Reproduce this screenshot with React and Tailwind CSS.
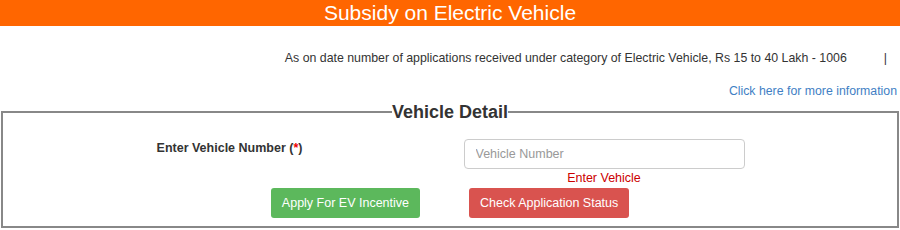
export default function App() {
    return (
        <div className="w-[900px] h-[230px] bg-white overflow-hidden font-['Liberation_Sans',Arial,sans-serif] text-[#333]">
            <div className="h-[26px] bg-[#ff6600] text-white text-[21px] leading-[26px] text-center">
                Subsidy on Electric Vehicle
            </div>

            <div className="mt-[24px] flex justify-end pr-[13px] text-[12.35px] leading-[16px]">
                <span>As on date number of applications received under category of Electric Vehicle, Rs 15 to 40 Lakh - 1006</span>
                <span className="ml-[37px]">|</span>
            </div>

            <div className="mt-[17px] text-right pr-[3px] text-[12.3px] leading-[16px]">
                <a href="#" className="text-[#3f80c4]">Click here for more information</a>
            </div>

            <fieldset className="mt-[2px] mx-px border-2 border-solid border-[#888] h-[127px]">
                <legend className="mx-auto px-0 text-[18px] leading-[22px] font-bold text-[#333]">Vehicle Detail</legend>

                <div className="grid grid-cols-2 mt-[16px] text-[12.5px] leading-[16px]">
                    <div className="text-center pt-px pl-[6px]">
                        <label className="font-bold">
                            Enter Vehicle Number (<span className="text-[#e00]">*</span>)
                        </label>
                    </div>
                    <div className="pl-[13px] w-[295px] flex flex-col items-center">
                        <input
                            type="text"
                            placeholder="Vehicle Number"
                            className="w-[281px] h-[30px] px-[11px] border border-[#ccc] rounded-[4px] text-[12.5px] placeholder:text-[#999] outline-none"
                        />
                        <span className="mt-px text-[#cc0000]">Enter Vehicle</span>
                    </div>
                </div>

                <div className="grid grid-cols-2 mt-[2px]">
                    <div className="flex justify-end pr-[30px]">
                        <button className="h-[30px] px-[11px] rounded-[3px] bg-[#5cb85c] text-white text-[12.5px]">
                            Apply For EV Incentive
                        </button>
                    </div>
                    <div className="pl-[19px]">
                        <button className="h-[30px] px-[11px] rounded-[3px] bg-[#d9534f] text-white text-[12.5px]">
                            Check Application Status
                        </button>
                    </div>
                </div>
            </fieldset>
        </div>
    );
}
